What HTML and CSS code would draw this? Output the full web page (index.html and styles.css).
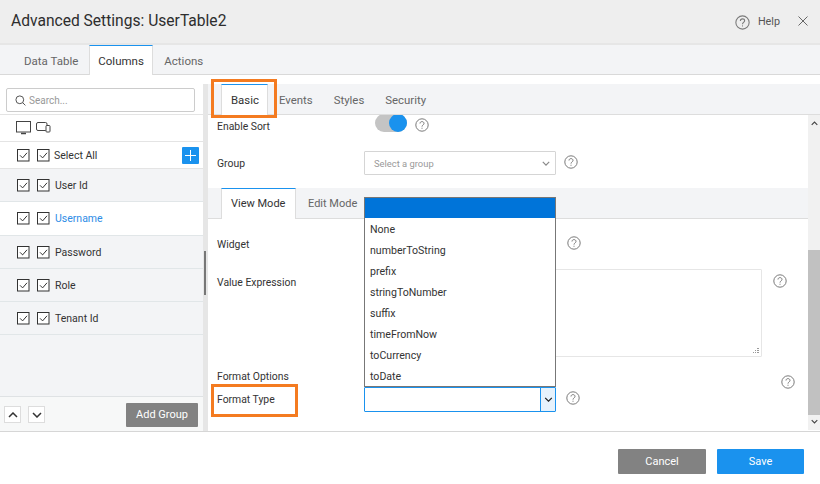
FILE: index.html
```html
<!DOCTYPE html>
<html lang="en">
<head>
<meta charset="utf-8">
<title>Advanced Settings</title>
<link rel="stylesheet" href="styles.css">
</head>
<body>
<svg class="defs" width="0" height="0">
  <symbol id="help" viewBox="0 0 14 14">
    <circle cx="7" cy="7" r="6.2" fill="none" stroke="#7a7a7a" stroke-width="1"/>
    <path d="M5 5.5C5 4.3 5.9 3.6 7 3.6s2 .7 2 1.8c0 1.5-2 1.6-2 3.2" fill="none" stroke="#7a7a7a" stroke-width="1"/>
    <path d="M6.5 9.7h1v1h-1z" fill="#7a7a7a"/>
  </symbol>
  <symbol id="check" viewBox="0 0 13 13">
    <rect x=".5" y=".5" width="11.5" height="11.5" fill="#fff" stroke="#333"/>
    <path d="M3 6.3l2.6 2.6L10 3.8" fill="none" stroke="#333"/>
  </symbol>
  <symbol id="chev" viewBox="0 0 10 6">
    <path d="M1 1l4 4 4-4" fill="none" stroke="currentColor" stroke-width="1.5"/>
  </symbol>
</svg>

<header class="title-bar">
  <h1 class="title">Advanced Settings: UserTable2</h1>
  <div class="title-actions">
    <svg class="help-large"><use href="#help"/></svg>
    <span class="help-text">Help</span>
    <svg class="close" viewBox="0 0 10 10"><path d="M.5.5l9 9M9.5.5l-9 9" stroke="#666" fill="none"/></svg>
  </div>
</header>

<nav class="main-tabs">
  <span class="main-tab">Data Table</span>
  <span class="main-tab active">Columns</span>
  <span class="main-tab">Actions</span>
</nav>

<main class="body">
  <aside class="side">
    <div class="search-wrap">
      <div class="search">
        <svg class="search-icon" viewBox="0 0 11 11"><circle cx="4.8" cy="4.8" r="3.9" fill="none" stroke="#555"/><path d="M7.6 7.6l2.8 2.8" stroke="#555"/></svg>
        <span>Search...</span>
      </div>
    </div>
    <div class="device-row">
      <svg class="desktop" viewBox="0 0 15 14"><rect x=".5" y=".5" width="14" height="10.5" fill="none" stroke="#444"/><path d="M5 12.5h5" stroke="#444" stroke-width="1.5"/></svg>
      <svg class="mobile" viewBox="0 0 15 11"><rect x=".5" y=".5" width="10.5" height="8" rx="1.5" fill="none" stroke="#444"/><rect x="10" y="3.5" width="4" height="6.5" rx=".8" fill="#fff" stroke="#444"/></svg>
    </div>
    <div class="select-all">
      <svg class="cb"><use href="#check"/></svg>
      <svg class="cb"><use href="#check"/></svg>
      <span class="col-name">Select All</span>
      <span class="plus"><svg viewBox="0 0 11 11"><path d="M5.5 0v11M0 5.5h11" stroke="#fff"/></svg></span>
    </div>
    <div class="col-row r1"><svg class="cb"><use href="#check"/></svg><svg class="cb"><use href="#check"/></svg><span class="col-name">User Id</span></div>
    <div class="col-row r2 current"><svg class="cb"><use href="#check"/></svg><svg class="cb"><use href="#check"/></svg><span class="col-name">Username</span></div>
    <div class="col-row r1"><svg class="cb"><use href="#check"/></svg><svg class="cb"><use href="#check"/></svg><span class="col-name">Password</span></div>
    <div class="col-row r1"><svg class="cb"><use href="#check"/></svg><svg class="cb"><use href="#check"/></svg><span class="col-name">Role</span></div>
    <div class="col-row r1"><svg class="cb"><use href="#check"/></svg><svg class="cb"><use href="#check"/></svg><span class="col-name">Tenant Id</span></div>
    <div class="side-fill"></div>
    <div class="side-foot">
      <span class="order"><svg viewBox="0 0 10 6" class="flip"><use href="#chev"/></svg></span>
      <span class="order"><svg viewBox="0 0 10 6"><use href="#chev"/></svg></span>
      <span class="add-group">Add Group</span>
    </div>
  </aside>

  <div class="splitter"><span class="splitter-thumb"></span></div>

  <section class="panel">
    <nav class="sub-tabs">
      <span class="sub-tab active">Basic<i class="mark mark-basic"></i></span>
      <span class="sub-tab">Events</span>
      <span class="sub-tab">Styles</span>
      <span class="sub-tab">Security</span>
    </nav>
    <div class="panel-body">
      <div class="content">
        <div class="row row-sort">
          <span class="label">Enable Sort</span>
          <span class="toggle"><span class="knob"></span></span>
          <svg class="help"><use href="#help"/></svg>
        </div>
        <div class="row row-group">
          <span class="label">Group</span>
          <div class="select"><span>Select a group</span><svg class="select-chev" viewBox="0 0 10 6"><use href="#chev"/></svg></div>
          <svg class="help help-side"><use href="#help"/></svg>
        </div>
        <div class="mode-tabs">
          <span class="mode-tab active">View Mode</span>
          <span class="mode-tab">Edit Mode</span>
        </div>
        <div class="row row-widget">
          <span class="label">Widget</span>
          <div class="field-space"></div>
          <svg class="help help-side"><use href="#help"/></svg>
        </div>
        <div class="row row-expr">
          <span class="label">Value Expression</span>
          <div class="textarea"><svg class="grip" viewBox="0 0 7 7"><path d="M5 1h2v1H5zM3 3h1v1H3zM5 3h2v1H5zM1 5h1v1H1zM3 5h1v1H3zM5 5h2v1H5z" fill="#999"/></svg></div>
          <svg class="help help-expr"><use href="#help"/></svg>
        </div>
        <div class="row row-options">
          <span class="label">Format Options</span>
          <svg class="help help-options"><use href="#help"/></svg>
        </div>
        <div class="row row-format">
          <span class="label">Format Type<i class="mark mark-format"></i></span>
          <div class="format-select">
            <ul class="list">
              <li class="selected"></li>
              <li>None</li>
              <li>numberToString</li>
              <li>prefix</li>
              <li>stringToNumber</li>
              <li>suffix</li>
              <li>timeFromNow</li>
              <li>toCurrency</li>
              <li>toDate</li>
            </ul>
            <span class="format-btn"><svg viewBox="0 0 10 6"><use href="#chev"/></svg></span>
          </div>
          <svg class="help help-side"><use href="#help"/></svg>
        </div>
      </div>
      <div class="scrollbar">
        <svg class="arrow arrow-up" viewBox="0 0 10 6"><path d="M1 5l4-4 4 4" fill="none" stroke="#444" stroke-width="1.6"/></svg>
        <span class="track"></span>
        <span class="thumb"></span>
        <svg class="arrow arrow-down" viewBox="0 0 10 6"><path d="M1 1l4 4 4-4" fill="none" stroke="#444" stroke-width="1.6"/></svg>
      </div>
    </div>
  </section>
</main>

<footer class="foot">
  <button class="btn cancel">Cancel</button>
  <button class="btn save">Save</button>
</footer>
</body>
</html>
```
FILE: styles.css
```css
* { box-sizing: border-box; }
html, body { margin: 0; height: 484px; overflow: hidden; }
body { font-family: Roboto, "Liberation Sans", sans-serif; font-size: 10.4px; color: #333; background: #fff; }
.defs { position: absolute; }
ul { list-style: none; margin: 0; padding: 0; }

.title-bar { height: 45px; background: #eee; border-bottom: 2px solid #e6e6e6; display: flex; align-items: center; justify-content: space-between; padding: 0 11px 1px; }
.title { margin: 0; font-size: 15.6px; font-weight: 400; color: #2d2d2d; }
.title-actions { display: flex; align-items: center; }
.help-large { width: 15px; height: 15px; margin-right: 8px; margin-top: 2px; }
.help-text { font-size: 10.8px; color: #555; margin-right: 18px; }
.close { width: 10px; height: 10px; margin-right: 1px; }

.main-tabs { height: 30px; background: #f3f4f6; border-bottom: 1px solid #d9d9d9; display: flex; padding-left: 13px; }
.main-tab { padding: 0 11px; line-height: 32px; font-size: 11.5px; color: #666; }
.main-tab.active { background: #fff; color: #333; height: 30px; border-top: 1px solid #1a92ee; border-left: 1px solid #ddd; border-right: 1px solid #ddd; padding: 0 8px; line-height: 30px; width: 64px; white-space: nowrap; }

.body { display: flex; height: 357px; padding-top: 9px; border-bottom: 1px solid #d6d6d6; }

.side { width: 203px; display: flex; flex-direction: column; background: #fff; }
.search-wrap { height: 31px; padding: 4px 8px 3px 6px; border-bottom: 1px solid #e4e4e4; }
.search { height: 24px; border: 1px solid #ccc; border-radius: 2px; display: flex; align-items: center; padding-left: 8px; font-size: 10px; color: #999; width: 189px; }
.search-icon { width: 11px; height: 11px; margin-right: 3px; }
.device-row { height: 27px; display: flex; align-items: flex-start; padding: 6px 0 0 16px; border-bottom: 1px solid #e4e4e4; }
.desktop { width: 15px; height: 14px; margin-right: 5px; }
.mobile { width: 15px; height: 11px; margin-top: 1px; }
.select-all { height: 27px; display: flex; align-items: center; padding-left: 17px; border-bottom: 1px solid #e4e4e4; }
.select-all .col-name { margin-left: -1px; }
.cb { width: 13px; height: 13px; margin-right: 7px; }
.cb + .cb { margin-right: 5px; }
.col-name { font-size: 10.5px; color: #333; }
.plus { width: 17px; height: 17px; background: #1a92ee; border-radius: 1px; margin-left: auto; margin-right: 4px; display: flex; align-items: center; justify-content: center; }
.plus svg { width: 11px; height: 11px; }
.col-row { height: 33px; display: flex; align-items: center; padding-left: 17px; border-bottom: 1px solid #e1e6e8; }
.col-row.r1 { background: #f3f4f6; }
.col-row.r2 { height: 34px; background: #fff; }
.current .col-name { color: #2e8ce6; }
.side-fill { flex: 1; background: #f3f4f6; border-bottom: 1px solid #dfe2e4; }
.side-foot { height: 34px; background: #f7f8f8; display: flex; align-items: center; padding: 0 5px 0 5px; }
.order { width: 17px; height: 17px; margin-right: 7px; margin-left: -1px; margin-top: 1px; border: 1px solid #ddd; background: #fff; color: #333; display: flex; align-items: center; justify-content: center; }
.order + .order { margin-left: 0; }
.order svg { width: 10px; height: 6px; }
.order .flip { transform: scaleY(-1); }
.add-group { margin-left: auto; width: 72px; height: 24px; line-height: 24px; text-align: center; background: #828282; color: #fff; border-radius: 1px; font-size: 11px; margin-top: 1px; }

.splitter { width: 5px; background: #e6e6e6; position: relative; }
.splitter-thumb { position: absolute; left: 1px; top: 167px; width: 2px; height: 44px; background: #777; }

.panel { width: 612px; display: flex; flex-direction: column; min-width: 0; }
.sub-tabs { height: 31px; background: #f3f4f6; border-bottom: 1px solid #ddd; display: flex; padding-left: 13px; }
.sub-tab { position: relative; padding: 0 9px; line-height: 33px; font-size: 11.4px; color: #666; margin-right: 4px; white-space: nowrap; }
.sub-tab:nth-child(2) { margin-left: 0; margin-right: 8px; padding: 0 4px; }
.sub-tab:nth-child(3) { padding: 0 8px 0 9px; margin-right: 5px; }
.sub-tab:nth-child(4) { padding: 0 8px; }
.sub-tab.active { background: #fff; color: #333; border-top: 1px solid #1a92ee; border-left: 1px solid #ddd; border-right: 1px solid #ddd; height: 31px; width: 47px; line-height: 31px; padding: 0 9px; margin-right: 7px; }
.mark { position: absolute; border: 3px solid #f47b20; display: block; }
.mark-basic { left: -11px; top: -6px; width: 66px; height: 39px; }
.mark-format { left: -6px; top: -9px; width: 87px; height: 33px; }

.panel-body { flex: 1; display: flex; min-height: 0; }
.content { width: 600px; height: 316px; overflow: hidden; position: relative; }
.row { display: flex; align-items: flex-start; padding-left: 9px; }
.label { position: relative; width: 147px; font-size: 10.4px; color: #333; line-height: 13px; flex: none; }
.row-sort { height: 36px; padding-top: 5px; }
.toggle { width: 32px; height: 18px; margin: -6px 0 0 11px; background: #c4c4c4; border-radius: 9px; position: relative; flex: none; }
.knob { position: absolute; right: 0; top: 0; width: 18px; height: 18px; border-radius: 50%; background: #1a92ee; }
.help { width: 14px; height: 14px; flex: none; }
.row-sort .help { margin: -2px 0 0 8px; }
.row-group { height: 37px; }
.row-group .label { margin-top: 6px; }
.select { width: 192px; height: 24px; border: 1px solid #d5d5d5; border-radius: 1px; display: flex; align-items: center; justify-content: space-between; padding: 0 5px 0 9px; font-size: 9.4px; color: #999; }
.select-chev { width: 8px; height: 5px; color: #888; }
.help-side { margin-left: 11px; margin-top: -2px; }
.row-group .help-side { margin: 4px 0 0 8px; }

.mode-tabs { height: 31px; background: #f3f4f6; border-bottom: 1px solid #ddd; display: flex; padding-left: 13px; }
.mode-tab { font-size: 11px; color: #666; line-height: 31px; padding: 0 9px; }
.mode-tab.active { background: #fff; color: #333; height: 31px; width: 75px; border-top: 1px solid #1a92ee; border-left: 1px solid #ddd; border-right: 1px solid #ddd; line-height: 30px; margin-right: 3px; }

.row-widget { height: 50px; padding-top: 19px; }
.field-space { width: 192px; flex: none; }
.row-expr { height: 92px; }
.row-expr .label { margin-top: 7px; }
.textarea { position: relative; width: 398px; height: 88px; border: 1px solid #e6e6e6; border-radius: 1px; }
.grip { position: absolute; right: 2px; bottom: 2px; width: 7px; height: 7px; }
.help-expr { margin: 5px 0 0 11px; }
.row-options { height: 20px; padding-top: 9px; }
.help-options { margin: 5px 0 0 417px; }
.row-format { position: relative; margin-top: 6px; }
.row-format .label { margin-top: 6px; }
.format-select { position: relative; width: 192px; height: 25px; border: 1px solid #1a92ee; border-radius: 1px; flex: none; }
.format-btn { position: absolute; right: 0; top: 0; width: 15px; height: 23px; background: #e6f2fc; border-left: 1px solid #1a92ee; color: #222; display: flex; align-items: center; justify-content: center; }
.format-btn svg { width: 9px; height: 5px; }
.row-format .help-side { margin-left: 10px; margin-top: 4px; }

.list { position: absolute; left: -1px; bottom: 24px; width: 192px; background: #fff; border: 1px solid #777; z-index: 2; }
.list li { height: 21px; line-height: 21px; padding: 1px 0 0 5px; font-size: 10.6px; color: #333; }
.list li.selected { background: #0074d9; height: 20px; padding: 0; }

.scrollbar { width: 12px; background: #f1f1f1; height: 315px; display: flex; flex-direction: column; align-items: center; }
.arrow { width: 7px; height: 5px; flex: none; }
.arrow-up { margin: 6px 0 5px; }
.arrow-down { margin-top: 4px; }
.track { height: 119px; width: 100%; flex: none; }
.thumb { height: 165px; width: 100%; flex: none; background: #c1c1c1; }

.foot { height: 51px; display: flex; justify-content: flex-end; padding: 17px 16px 0 0; gap: 11px; background: #fff; }
.btn { width: 88px; height: 25px; border: none; border-radius: 1px; color: #fff; font-family: inherit; font-size: 11px; padding: 0; }
.cancel { background: #828282; }
.save { background: #1a92ee; width: 87px; }
```
